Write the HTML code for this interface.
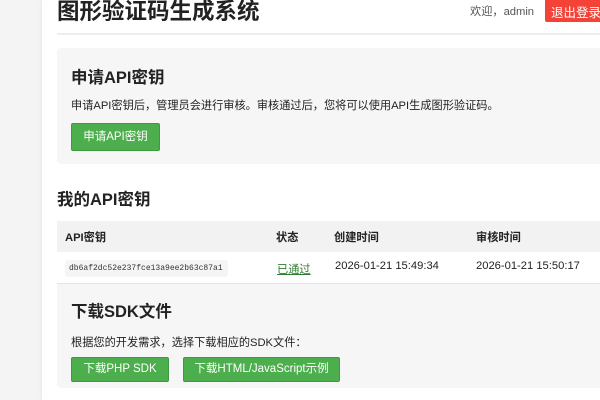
<!DOCTYPE html>
<html><head><meta charset="utf-8"><style>
*{margin:0;padding:0;box-sizing:border-box}
body{width:600px;height:400px;overflow:hidden;background:#f4f4f4;font-family:"Liberation Sans","Noto Sans CJK SC",sans-serif;color:#222;position:relative}
.wrap{position:absolute;left:42px;top:0;width:600px;height:400px;background:#fff;box-shadow:0 0 4px rgba(0,0,0,.08)}
.a{position:absolute;white-space:nowrap}
.btn{position:absolute;background:#4cae4c;color:#fff;font-size:11.5px;text-align:center;border-radius:2px;border:1px solid #3f9a3f}
.box{position:absolute;left:57px;width:560px;background:#f6f6f6;border-radius:4px}
h{position:absolute;white-space:nowrap;font-size:16.5px;font-weight:bold}
.t{font-size:11.2px}
</style></head><body>
<div class="wrap"></div>
<div class="a" style="left:57px;top:-6px;font-size:22.5px;font-weight:bold;color:#222">图形验证码生成系统</div>
<div class="a t" style="left:470px;top:3px;color:#555">欢迎，admin</div>
<div class="a" style="left:545px;top:-2px;width:70px;height:24px;background:#f44336;color:#fff;font-size:12.5px;padding:4px 0 0 6px;border-radius:2px">退出登录</div>
<div class="a" style="left:57px;top:33px;width:560px;height:2px;background:#eee"></div>
<div class="box" style="top:48px;height:116px"></div>
<h style="left:71px;top:64px">申请API密钥</h>
<div class="a t" style="left:71px;top:97px">申请API密钥后，管理员会进行审核。审核通过后，您将可以使用API生成图形验证码。</div>
<div class="btn" style="left:71px;top:123px;width:89px;height:28px;line-height:26px">申请API密钥</div>
<h style="left:57px;top:186px">我的API密钥</h>
<div class="a" style="left:57px;top:221px;width:560px;height:31px;background:#f2f2f2"></div>
<div class="a t" style="left:65px;top:229px;font-weight:bold">API密钥</div>
<div class="a t" style="left:276px;top:229px;font-weight:bold">状态</div>
<div class="a t" style="left:334px;top:229px;font-weight:bold">创建时间</div>
<div class="a t" style="left:476px;top:229px;font-weight:bold">审核时间</div>
<div class="a" style="left:65px;top:260px;width:163px;height:17px;background:#f5f5f5;border-radius:3px;font-family:'Liberation Mono',monospace;font-size:8px;padding:4px 0 0 4px;color:#333">db6af2dc52e237fce13a9ee2b63c87a1</div>
<div class="a t" style="left:277px;top:261px;color:#2e7d32;text-decoration:underline">已通过</div>
<div class="a t" style="left:335px;top:260px">2026-01-21 15:49:34</div>
<div class="a t" style="left:476px;top:260px">2026-01-21 15:50:17</div>
<div class="a" style="left:57px;top:283px;width:560px;height:1px;background:#e4e4e4"></div>
<div class="box" style="top:284px;height:104px;border-radius:0 0 4px 4px"></div>
<h style="left:71px;top:298px">下载SDK文件</h>
<div class="a t" style="left:71px;top:334px">根据您的开发需求，选择下载相应的SDK文件：</div>
<div class="btn" style="left:71px;top:357px;width:98px;height:25px;line-height:23px">下载PHP SDK</div>
<div class="btn" style="left:183px;top:357px;width:157px;height:25px;line-height:23px">下载HTML/JavaScript示例</div>
</body></html>
